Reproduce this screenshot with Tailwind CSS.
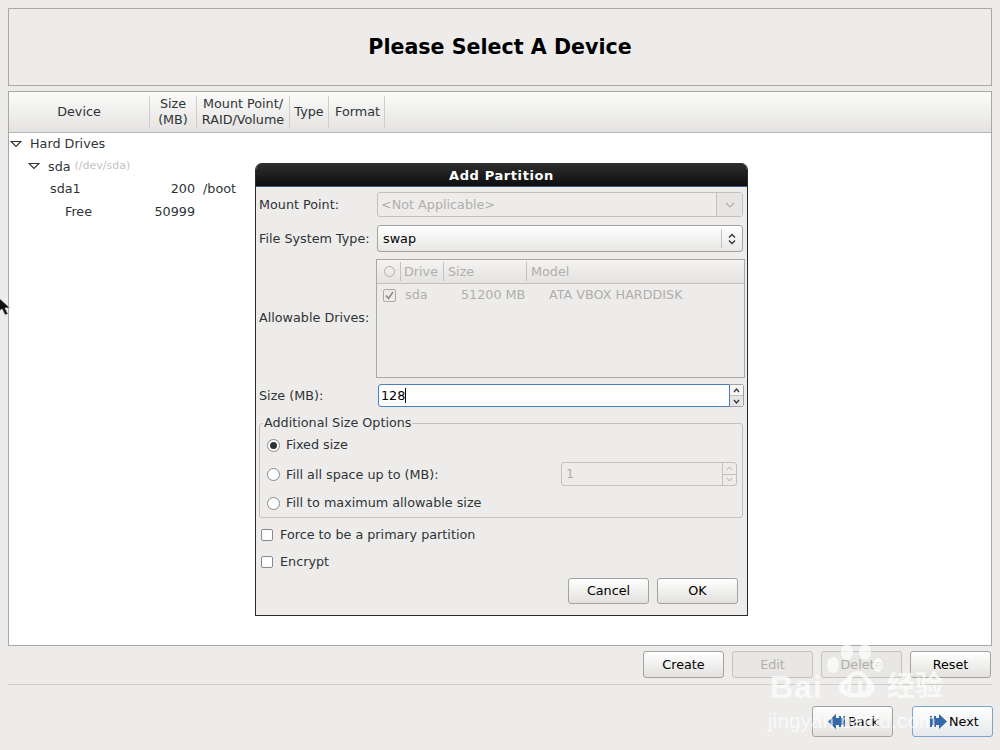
<!DOCTYPE html>
<html lang="en">

<head>
    <meta charset="UTF-8">
    <title>Please Select A Device</title>
    <script src="https://cdn.jsdelivr.net/npm/@tailwindcss/browser@4"></script>
</head>

<body class="relative w-[1000px] h-[750px] overflow-hidden bg-[#edeceb] font-['DejaVu_Sans',sans-serif] text-[12.75px] text-[#2e3436]">
    <div class="px-2 pt-2">
        <!-- header -->
        <div class="h-[78px] border border-[#a9a8a4] flex items-center justify-center">
            <h1 class="text-[20.6px] font-bold text-black">Please Select A Device</h1>
        </div>

        <!-- device tree -->
        <div class="mt-[5px] h-[555px] border border-[#a9a8a4] bg-white">
            <div class="flex h-[41px] border-b border-[#b5b4b0] bg-gradient-to-b from-[#fbfbfa] to-[#e4e3e1] leading-[16px]">
                <div class="w-[141px] flex items-center justify-center border-r border-[#cfcecb] my-1">Device</div>
                <div class="w-[47px] flex items-center justify-center text-center border-r border-[#cfcecb] my-1">Size<br>(MB)</div>
                <div class="w-[93px] flex items-center justify-center text-center border-r border-[#cfcecb] my-1">Mount Point/<br>RAID/Volume</div>
                <div class="w-[39px] flex items-center justify-center border-r border-[#cfcecb] my-1">Type</div>
                <div class="w-[56px] flex items-center justify-center border-r border-[#cfcecb] pl-[2px] my-1">Format</div>
            </div>
            <div class="-mt-[0.5px]">
                <div class="h-[22.5px] flex items-center">
                    <svg class="ml-[1px] w-3 h-2" viewBox="0 0 12 8"><path d="M1 1.5h10L6 6.5z" fill="#fff" stroke="#2e3436" stroke-width="1.2"/></svg>
                    <span class="ml-[8px]">Hard Drives</span>
                </div>
                <div class="h-[22.5px] flex items-center">
                    <svg class="ml-[19px] w-3 h-2" viewBox="0 0 12 8"><path d="M1 1.5h10L6 6.5z" fill="#fff" stroke="#2e3436" stroke-width="1.2"/></svg>
                    <span class="ml-[8px]">sda</span>
                    <span class="ml-1 text-[11px] text-[#c4c4c2]">(/dev/sda)</span>
                </div>
                <div class="h-[22.5px] flex items-center">
                    <span class="ml-[41px] w-[100px]">sda1</span>
                    <span class="w-[45px] text-right">200</span>
                    <span class="ml-2">/boot</span>
                </div>
                <div class="h-[22.5px] flex items-center">
                    <span class="ml-[56px] w-[85px]">Free</span>
                    <span class="w-[45px] text-right">50999</span>
                </div>
            </div>
        </div>

        <!-- partition buttons -->
        <div class="mt-[5px] flex justify-end gap-[8px] pr-[1px]">
            <button class="w-[81px] h-[27px] rounded-[3px] border border-[#a3a29e] bg-gradient-to-b from-white to-[#e2e1de] text-black">Create</button>
            <button class="w-[81px] h-[27px] rounded-[3px] border border-[#c4c3c0] bg-[#e8e7e5] text-[#b0afac]">Edit</button>
            <button class="w-[81px] h-[27px] rounded-[3px] border border-[#c4c3c0] bg-[#e8e7e5] text-[#b0afac]">Delete</button>
            <button class="w-[81px] h-[27px] rounded-[3px] border border-[#a3a29e] bg-gradient-to-b from-white to-[#e2e1de] text-black">Reset</button>
        </div>

        <div class="mt-[6px] border-t border-[#cfcecb]"></div>

        <!-- navigation -->
        <div class="mt-[21px] -mr-[1px] flex justify-end gap-[19px]">
            <button class="w-[81px] h-[31px] rounded-[3px] border border-[#a3a29e] bg-gradient-to-b from-white to-[#e2e1de] text-black flex items-center pl-[15px] gap-[1px]">
                <svg class="w-[19px] h-[17px]" viewBox="0 0 19 17"><path d="M0 8.5 8 1v4h3V3h2v2h2V3h2v11h-2v-2h-2v2h-2v-2H8v4z" fill="#3468a8"/></svg>
                <span>Back</span>
            </button>
            <button class="w-[81px] h-[31px] rounded-[3px] border border-[#7ea3cf] bg-gradient-to-b from-white to-[#e6e8ea] text-black flex items-center pl-[15px] gap-[2px]">
                <svg class="w-[19px] h-[17px]" viewBox="0 0 19 17"><path d="M19 8.5 11 1v4H8V3H6v2H4V3H2v11h2v-2h2v2h2v-2h3v4z" fill="#3468a8"/></svg>
                <span>Next</span>
            </button>
        </div>
    </div>

    <!-- dialog -->
    <div class="absolute left-[255px] top-[163px] w-[493px] h-[453px] rounded-t-[7px] overflow-hidden border border-t-0 border-[#2a2a2a] px-px pb-px bg-[#edeceb]">
        <div class="-mx-[2px] h-[24px] bg-gradient-to-b from-[#2f2f2f] to-[#0f0f0f] border-b border-[#3c5f85] flex items-center justify-center pt-[2px] text-white font-bold text-[13px] tracking-[0.6px]">Add Partition</div>

        <div class="flex items-center h-[25px] mt-[5px]">
            <label class="ml-[2px] w-[118px]">Mount Point:</label>
            <div class="w-[366px] h-[25px] rounded-[3px] border border-[#c2c1be] flex items-center">
                <span class="flex-1 pl-[3px] text-[#b0afac]">&lt;Not Applicable&gt;</span>
                <div class="w-[26px] h-full border-l border-[#c2c1be] bg-[#e6e5e3] flex items-center justify-center">
                    <svg class="w-[10px] h-[6px]" viewBox="0 0 10 6"><path d="M1 1l4 4 4-4" fill="none" stroke="#b0afac" stroke-width="1.2"/></svg>
                </div>
            </div>
        </div>

        <div class="flex items-center h-[27px] mt-[8px]">
            <label class="ml-[2px] w-[118px]">File System Type:</label>
            <div class="w-[366px] h-[27px] rounded-[3px] border border-[#a3a29e] bg-gradient-to-b from-white to-[#e8e7e5] flex items-center">
                <span class="flex-1 pl-[5px] text-black">swap</span>
                <div class="w-[21px] h-[19px] border-l border-[#c2c1be] flex items-center justify-center">
                    <svg class="w-[8px] h-[12px]" viewBox="0 0 8 12"><path d="M1 4.5l3-3 3 3M1 7.5l3 3 3-3" fill="none" stroke="#2e3436" stroke-width="1.3"/></svg>
                </div>
            </div>
        </div>

        <div class="flex items-center h-[119px] mt-[7px]">
            <label class="ml-[2px] w-[117px] -mt-[1px]">Allowable Drives:</label>
            <div class="w-[369px] h-[119px] border border-[#a9a8a4] text-[#b0afac]">
                <div class="flex items-center h-[24px] border-b border-[#c2c1be] bg-gradient-to-b from-[#f4f3f2] to-[#e4e3e1]">
                    <div class="w-[23px] flex justify-end pr-[5px]"><span class="block w-[11px] h-[11px] rounded-full border border-[#b0afac]"></span></div>
                    <div class="w-[43px] pl-[3px] border-l border-[#c2c1be]">Drive</div>
                    <div class="w-[83px] pl-[4px] border-l border-[#c2c1be]">Size</div>
                    <div class="pl-[4px] border-l border-[#c2c1be]">Model</div>
                </div>
                <div class="flex items-center h-[22px]">
                    <div class="ml-[6px] w-[13px] h-[13px] rounded-[2px] border border-[#a9a8a4] flex items-center justify-center">
                        <svg class="w-[9px] h-[9px]" viewBox="0 0 9 9"><path d="M1 4.5l2.5 3L8 1" fill="none" stroke="#8a8987" stroke-width="1.6"/></svg>
                    </div>
                    <span class="ml-[9px] w-[56px]">sda</span>
                    <span class="w-[88px]">51200 MB</span>
                    <span>ATA VBOX HARDDISK</span>
                </div>
            </div>
        </div>

        <div class="flex items-center h-[23px] mt-[6px]">
            <label class="ml-[2px] w-[119px]">Size (MB):</label>
            <div class="w-[352px] h-[23px] rounded-l-[3px] border border-[#4a7fc1] bg-white flex items-center pl-[2px] text-black">128<span class="w-px h-[15px] bg-black"></span></div>
            <div class="w-[14px] h-[23px] border border-l-0 border-[#a3a29e] rounded-r-[3px] flex flex-col">
                <div class="flex-1 flex items-center justify-center border-b border-[#c2c1be] bg-[#f6f6f5]"><svg class="w-[7px] h-[5px]" viewBox="0 0 7 5"><path d="M1 4l2.5-3L6 4" fill="none" stroke="#2e3436" stroke-width="1.2"/></svg></div>
                <div class="flex-1 flex items-center justify-center bg-[#e6e5e3]"><svg class="w-[7px] h-[5px]" viewBox="0 0 7 5"><path d="M1 1l2.5 3L6 1" fill="none" stroke="#2e3436" stroke-width="1.2"/></svg></div>
            </div>
        </div>

        <!-- size options -->
        <div class="relative ml-[2px] mt-[16px] w-[484px] h-[95px] rounded-[3px] border border-[#c2c1be]">
            <span class="absolute left-[3px] top-[-9px] px-px leading-[16px] bg-[#edeceb]">Additional Size Options</span>
            <div class="flex items-center h-[20px] mt-[11px] ml-[7px]">
                <span class="w-[13px] h-[13px] rounded-full border border-[#8a8987] bg-white flex items-center justify-center"><span class="block w-[7px] h-[7px] rounded-full bg-[#2e3436]"></span></span>
                <span class="ml-[6px]">Fixed size</span>
            </div>
            <div class="flex items-center h-[24px] mt-[7px] ml-[7px]">
                <span class="w-[13px] h-[13px] rounded-full border border-[#8a8987] bg-white"></span>
                <span class="ml-[6px] w-[275px] mt-[1px]">Fill all space up to (MB):</span>
                <div class="w-[176px] h-[24px] rounded-[3px] border border-[#c2c1be] flex items-center">
                    <span class="flex-1 pl-[4px] text-[#b0afac]">1</span>
                    <div class="w-[14px] h-full border-l border-[#c2c1be] flex flex-col">
                        <div class="flex-1 flex items-center justify-center border-b border-[#c2c1be]"><svg class="w-[7px] h-[5px]" viewBox="0 0 7 5"><path d="M1 4l2.5-3L6 4" fill="none" stroke="#b0afac" stroke-width="1"/></svg></div>
                        <div class="flex-1 flex items-center justify-center"><svg class="w-[7px] h-[5px]" viewBox="0 0 7 5"><path d="M1 1l2.5 3L6 1" fill="none" stroke="#b0afac" stroke-width="1"/></svg></div>
                    </div>
                </div>
            </div>
            <div class="flex items-center h-[20px] mt-[7px] ml-[7px]">
                <span class="w-[13px] h-[13px] rounded-full border border-[#8a8987] bg-white"></span>
                <span class="ml-[6px]">Fill to maximum allowable size</span>
            </div>
        </div>

        <div class="flex items-center h-[20px] mt-[7px] ml-[4px]">
            <span class="w-[12px] h-[12px] rounded-[2px] border border-[#8a8987] bg-white"></span>
            <span class="ml-[7px]">Force to be a primary partition</span>
        </div>
        <div class="flex items-center h-[20px] mt-[7px] ml-[4px]">
            <span class="w-[12px] h-[12px] rounded-[2px] border border-[#8a8987] bg-white"></span>
            <span class="ml-[7px]">Encrypt</span>
        </div>

        <div class="mt-[6px] flex justify-end gap-[8px] pr-[8px]">
            <button class="w-[81px] h-[26px] rounded-[3px] border border-[#a3a29e] bg-gradient-to-b from-white to-[#e2e1de] text-black">Cancel</button>
            <button class="w-[81px] h-[26px] rounded-[3px] border border-[#a3a29e] bg-gradient-to-b from-white to-[#e2e1de] text-black">OK</button>
        </div>
    </div>

    <!-- mouse pointer -->
    <svg class="absolute left-[-3px] top-[296px] w-[13px] h-[21px]" viewBox="0 0 13 21"><path d="M1 1v15l4-3 3 6 3-1-3-6h5z" fill="#111" stroke="#ddd" stroke-width="0.7"/></svg>

    <!-- watermark -->
    <div class="absolute left-[768px] top-[640px] w-[190px] h-[110px] text-white/70 pointer-events-none">
        <svg class="absolute left-[55px] top-0 w-[64px] h-[62px]" viewBox="0 0 64 62" fill="none">
            <ellipse cx="10" cy="25" rx="6" ry="8" fill="#fff" fill-opacity=".7"/>
            <ellipse cx="24" cy="12" rx="6" ry="8" fill="#fff" fill-opacity=".7"/>
            <ellipse cx="42" cy="12" rx="6" ry="8" fill="#fff" fill-opacity=".7"/>
            <ellipse cx="55" cy="25" rx="5" ry="7" fill="#fff" fill-opacity=".7"/>
            <path d="M21 52c-5-7 3-11 7-16 4-4 9-4 13 0 4 5 12 9 7 16-3 5-9 3-13 3s-11 2-14-3z" stroke="#fff" stroke-opacity=".7" stroke-width="4"/>
        </svg>
        <span class="absolute left-[2px] top-[29px] text-[32px] leading-[36px] font-bold tracking-[1px] font-['Liberation_Sans',sans-serif]">Bai</span>
        <span class="absolute left-[70px] top-[32px] text-[24px] leading-[28px] font-bold tracking-[4px] font-['Liberation_Sans',sans-serif]">du</span>
        <span class="absolute left-[119px] top-[26px] text-[28px] leading-[36px] font-bold font-['Noto_Sans_CJK_SC',sans-serif]">经验</span>
        <span class="absolute left-[0px] top-[68px] text-[20px] leading-[26px] tracking-[0.4px] font-['Liberation_Sans',sans-serif]">jingyan.baidu.com</span>
    </div>
</body>

</html>
